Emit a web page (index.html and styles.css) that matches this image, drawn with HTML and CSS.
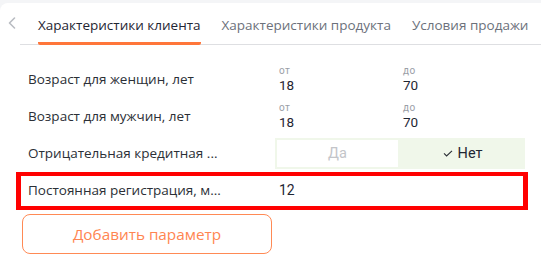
FILE: index.html
```html
<!DOCTYPE html>
<html lang="ru">
<head>
    <meta charset="UTF-8">
    <meta name="viewport" content="width=device-width, initial-scale=1.0">
    <title>Параметры</title>
    <link rel="stylesheet" href="styles.css">
</head>
<body>
    <div class="card">
        <div class="tab-bar">
            <button class="tab-arrow" title="Назад">
                <svg width="8" height="12" viewBox="0 0 8 12"><path d="M6.5 1 L1.5 6 L6.5 11" fill="none" stroke="#b9bcc2" stroke-width="1.6" stroke-linecap="round" stroke-linejoin="round"/></svg>
            </button>
            <div class="tabs">
                <div class="tab active">Характеристики клиента</div>
                <div class="tab">Характеристики продукта</div>
                <div class="tab">Условия продажи</div>
            </div>
        </div>

        <div class="params">
            <div class="param-row">
                <div class="param-label">Возраст для женщин, лет</div>
                <div class="param-value">
                    <span class="value-hint">от</span>
                    <span class="value-num">18</span>
                </div>
                <div class="param-value">
                    <span class="value-hint">до</span>
                    <span class="value-num">70</span>
                </div>
            </div>
            <div class="param-row">
                <div class="param-label">Возраст для мужчин, лет</div>
                <div class="param-value">
                    <span class="value-hint">от</span>
                    <span class="value-num">18</span>
                </div>
                <div class="param-value">
                    <span class="value-hint">до</span>
                    <span class="value-num">70</span>
                </div>
            </div>
            <div class="param-row">
                <div class="param-label">Отрицательная кредитная ...</div>
                <div class="switch">
                    <div class="switch-option">Да</div>
                    <div class="switch-option selected">
                        <svg width="10" height="7" viewBox="0 0 10 7"><path d="M1 3.4 L3.6 6 L9 0.8" fill="none" stroke="#2b2f36" stroke-width="1.1"/></svg>
                        Нет
                    </div>
                </div>
            </div>
            <div class="param-row highlighted">
                <div class="param-label">Постоянная регистрация, м...</div>
                <div class="param-value">
                    <span class="value-num single">12</span>
                </div>
            </div>
        </div>

        <button class="add-btn">Добавить параметр</button>
    </div>
</body>
</html>
```

FILE: styles.css
```css
* {
    margin: 0;
    padding: 0;
    box-sizing: border-box;
}

body {
    font-family: 'Open Sans', 'Noto Sans', sans-serif;
    background: #f4f5f7;
    height: 100vh;
    overflow: hidden;
    padding-top: 3px;
}

.card {
    background: #ffffff;
    border-radius: 8px 0 0 0;
    height: 100%;
}

.tab-bar {
    display: flex;
    align-items: flex-start;
}

.tab-arrow {
    width: 20px;
    height: 42px;
    border: none;
    background: none;
    display: flex;
    justify-content: center;
    padding-top: 14px;
    padding-left: 3px;
}

.tabs {
    flex: 1;
    display: flex;
    gap: 21px;
    padding-left: 18px;
    border-bottom: 1px solid #dedfe2;
    white-space: nowrap;
}

.tab {
    font-size: 13.5px;
    line-height: 20px;
    color: #6c717b;
    padding: 12px 0 7px;
    border-bottom: 3px solid transparent;
    margin-bottom: -1px;
}

.tab.active {
    color: #1f2633;
    border-bottom-color: #ff763a;
    border-radius: 0 0 2px 2px;
}

.params {
    padding-top: 16px;
}

.param-row {
    display: grid;
    grid-template-columns: 247px 124px 124px;
    align-items: center;
    height: 37px;
    margin: 0 13px 0 16px;
    padding-left: 7px;
    border: 5px solid transparent;
    border-top-width: 0;
    border-bottom-width: 0;
}

.param-row.highlighted {
    height: 38px;
    border: 4px solid #ff0000;
    border-left-width: 5px;
    border-right-width: 5px;
}

.param-label {
    font-size: 13.5px;
    color: #2b2f36;
    white-space: nowrap;
    padding-bottom: 2px;
}

.param-value {
    display: flex;
    flex-direction: column;
    padding-left: 4px;
    font-family: Roboto, 'Open Sans', sans-serif;
}

.value-hint {
    font-size: 10px;
    line-height: 12px;
    letter-spacing: 0.5px;
    color: #9a9ea6;
}

.value-num {
    font-size: 13.5px;
    line-height: 17px;
    color: #1f2633;
}

.value-num.single {
    font-size: 14px;
    padding-bottom: 2px;
}

.switch {
    grid-column: 2 / 4;
    display: grid;
    grid-template-columns: 1fr 1fr;
    height: 31px;
    margin-right: -2px;
    font-family: Roboto, 'Open Sans', sans-serif;
    font-size: 14.5px;
}

.switch-option {
    display: flex;
    align-items: center;
    justify-content: center;
    gap: 5px;
    color: #c3c5c9;
    border: 2px solid #f0f7ea;
}

.switch-option.selected {
    background: #f0f7ea;
    color: #1f2633;
}

.add-btn {
    display: block;
    margin: 4px 0 0 22px;
    width: 250px;
    height: 40px;
    border: 1px solid #ff8a55;
    border-radius: 8px;
    background: #ffffff;
    color: #ff8551;
    font-family: 'Open Sans', 'Noto Sans', sans-serif;
    font-size: 15.3px;
}
```
